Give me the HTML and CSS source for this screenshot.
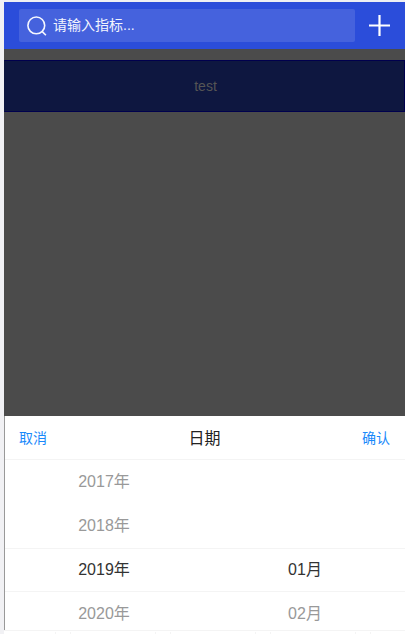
FILE: index.html
```html
<!DOCTYPE html>
<html lang="zh">
<head>
<meta charset="utf-8">
<title>日期</title>
<link rel="stylesheet" href="styles.css">
</head>
<body>
<div class="phone">
  <header class="topbar">
    <div class="search">
      <svg class="search-icon" viewBox="0 0 22 22"><circle cx="9.3" cy="9.4" r="8.4"/><path d="M15.3 15.6L18.9 19.2"/></svg>
      <span>请输入指标...</span>
    </div>
    <svg class="plus" viewBox="0 0 22 22"><path d="M0 10.5H21M10.5 0V21"/></svg>
  </header>
  <main class="content">
    <div class="button">test</div>
  </main>
  <section class="picker">
    <div class="picker-head">
      <span class="action">取消</span>
      <span class="title">日期</span>
      <span class="action">确认</span>
    </div>
    <div class="row"><span>2017年</span><span></span></div>
    <div class="row"><span>2018年</span><span></span></div>
    <div class="row selected"><span>2019年</span><span>01月</span></div>
    <div class="row last"><span>2020年</span><span>02月</span></div>
  </section>
</div>
<footer class="edge"><i></i><i></i><i></i><i></i></footer>
</body>
</html>
```
FILE: styles.css
```css
* { box-sizing: border-box; }
body {
  margin: 0;
  height: 634px;
  padding: 2px 0 0 4px;
  overflow: hidden;
  background: linear-gradient(90deg, #f1f1f4 4px, #fff 4px);
  font-family: "Liberation Sans", "Noto Sans CJK SC", sans-serif;
}
.phone { height: 628px; display: flex; flex-direction: column; box-shadow: 0 -2px 0 #eeeff3; }
.topbar {
  height: 47px;
  display: flex;
  align-items: center;
  justify-content: space-between;
  padding: 0 14px 0 15px;
  background: #2b4dda;
}
.search {
  width: 336px;
  height: 33px;
  border-radius: 2px;
  background: #4562dd;
  color: #f3f5fd;
  display: flex;
  align-items: center;
  padding: 0 0 3px 8px;
  font-size: 14px;
}
.search-icon { width: 22px; height: 22px; margin: 5px 4px 0 0; }
.search-icon, .plus { fill: none; stroke: #f5f7ff; stroke-width: 1.6; }
.plus { width: 22px; height: 22px; stroke: #fff; stroke-width: 2.2; }
.content { height: 367px; padding-top: 11px; background: #4b4b4b; }
.button {
  height: 52px;
  border: 1px solid #00004d;
  border-left-color: #0e1740;
  background: #0e1740;
  color: #555;
  font-size: 14px;
  line-height: 50px;
  text-align: center;
  padding-left: 2px;
}
.picker {
  height: 214px;
  border-left: 1px solid #999;
  background: #fff;
}
.picker-head {
  height: 44px;
  padding: 0 15px 2px 14px;
  border-bottom: 1px solid #f4f4f4;
  display: flex;
  align-items: center;
  justify-content: space-between;
}
.action { font-size: 14px; color: #1989fa; }
.title { font-size: 16px; color: #222; }
.row {
  height: 44px;
  display: grid;
  grid-template-columns: 198px 1fr;
  line-height: 43px;
  text-align: center;
  font-size: 16px;
  color: #999;
}
.row span + span { padding-left: 2px; }
.selected {
  border: solid #f4f4f4;
  border-width: 1px 0;
  color: #333;
  line-height: 42px;
}
.last { height: 38px; }
.edge {
  height: 4px;
  border-top: 1px solid #f4f4f4;
  display: grid;
  grid-template-columns: repeat(4, 100px);
  padding-left: 51px;
}
.edge i { width: 16px; border: solid #f4f4f4; border-width: 0 1px; margin-top: 1px; }
```
